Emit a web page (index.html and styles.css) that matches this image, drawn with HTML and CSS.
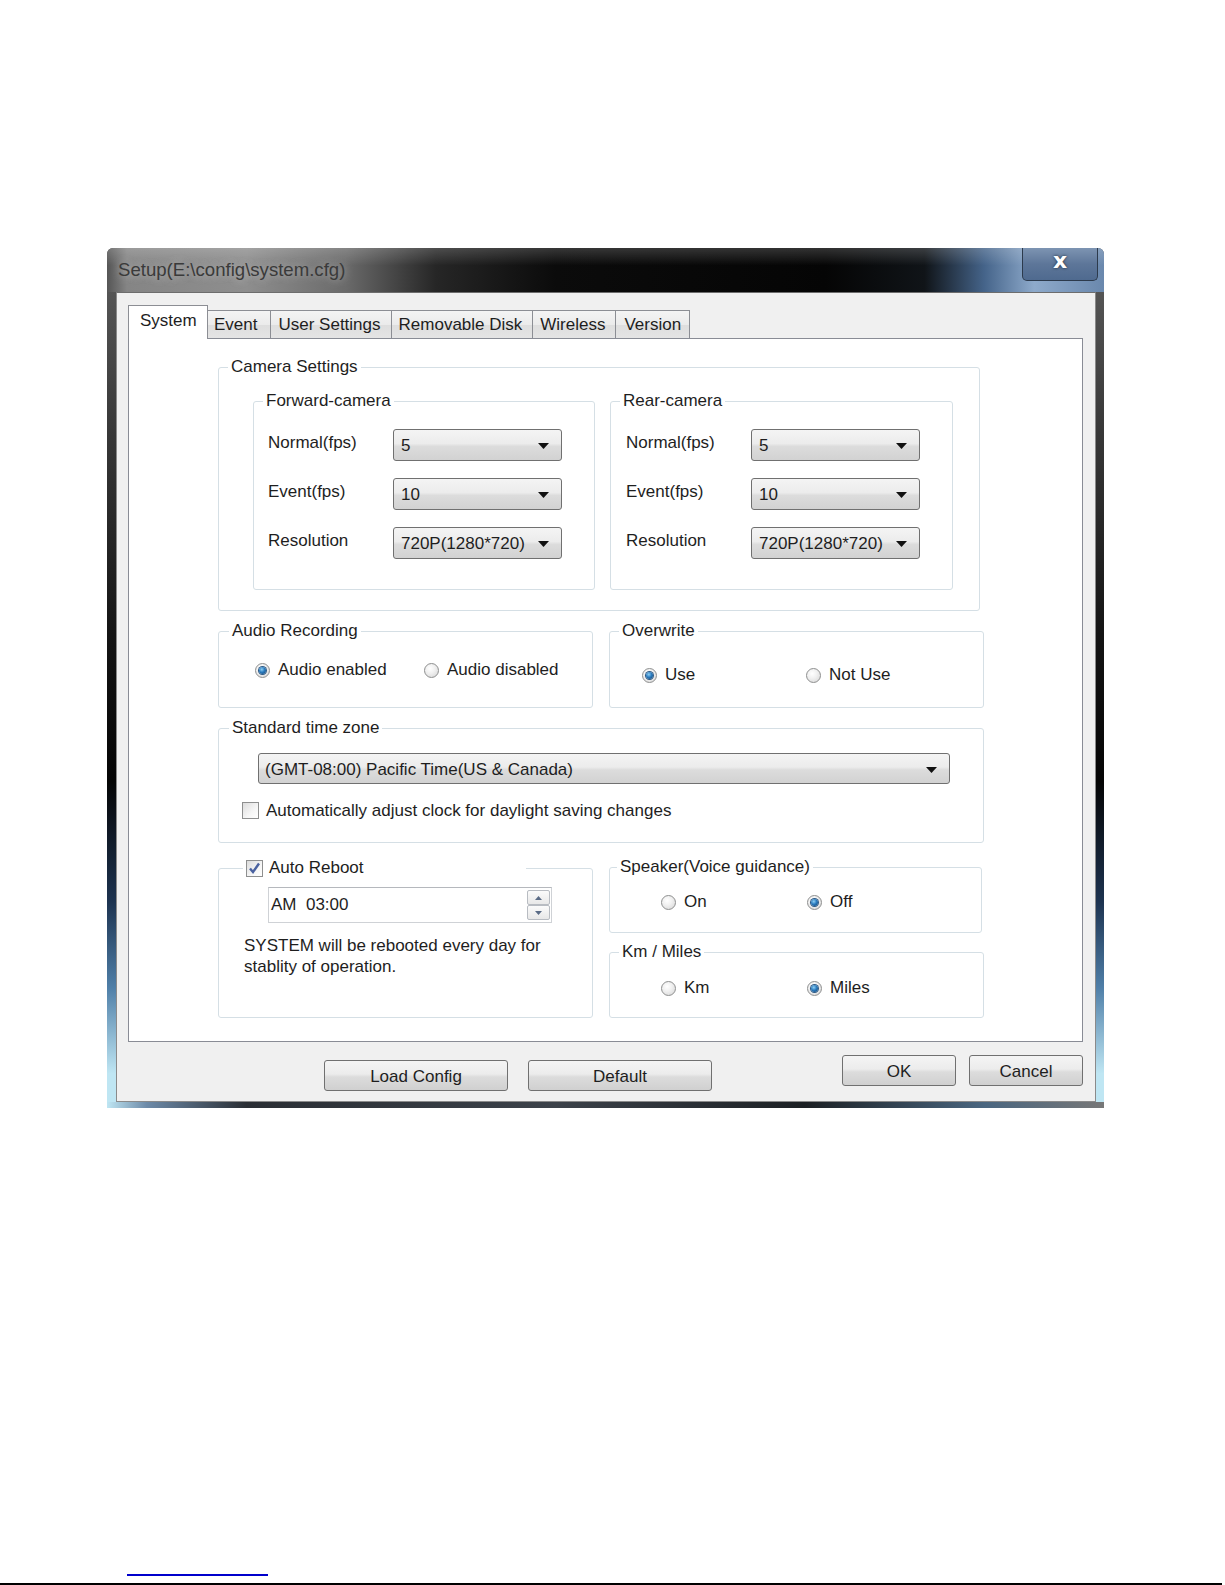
FILE: index.html
```html
<!DOCTYPE html>
<html lang="en">
<head>
    <meta charset="UTF-8">
    <title>Setup</title>
    <link rel="stylesheet" href="styles.css">
</head>
<body>
<div class="sheet">
    <div class="window">
        <div class="titlebar">
            <div class="title">Setup(E:\config\system.cfg)</div>
            <div class="close">x</div>
        </div>
        <div class="frame">
            <div class="client">
                <div class="tabs">
                    <div class="tab active">System</div>
                    <div class="tab">Event</div>
                    <div class="tab">User Settings</div>
                    <div class="tab">Removable Disk</div>
                    <div class="tab">Wireless</div>
                    <div class="tab">Version</div>
                </div>

                <div class="panel">
                    <!-- camera -->
                    <fieldset class="group camera">
                        <legend>Camera Settings</legend>
                        <div class="cams">
                            <fieldset class="group cam">
                                <legend>Forward-camera</legend>
                                <div class="rows">
                                    <div class="row"><span class="lbl">Normal(fps)</span><div class="combo">5<svg width="11" height="6"><path d="M0 0h11L5.5 6z"/></svg></div></div>
                                    <div class="row"><span class="lbl">Event(fps)</span><div class="combo">10<svg width="11" height="6"><path d="M0 0h11L5.5 6z"/></svg></div></div>
                                    <div class="row"><span class="lbl">Resolution</span><div class="combo">720P(1280*720)<svg width="11" height="6"><path d="M0 0h11L5.5 6z"/></svg></div></div>
                                </div>
                            </fieldset>
                            <fieldset class="group cam rear">
                                <legend>Rear-camera</legend>
                                <div class="rows">
                                    <div class="row"><span class="lbl">Normal(fps)</span><div class="combo">5<svg width="11" height="6"><path d="M0 0h11L5.5 6z"/></svg></div></div>
                                    <div class="row"><span class="lbl">Event(fps)</span><div class="combo">10<svg width="11" height="6"><path d="M0 0h11L5.5 6z"/></svg></div></div>
                                    <div class="row"><span class="lbl">Resolution</span><div class="combo">720P(1280*720)<svg width="11" height="6"><path d="M0 0h11L5.5 6z"/></svg></div></div>
                                </div>
                            </fieldset>
                        </div>
                    </fieldset>

                    <!-- audio / overwrite -->
                    <div class="pair">
                        <fieldset class="group audio">
                            <legend>Audio Recording</legend>
                            <div class="radios">
                                <label class="radio"><span class="dot on"></span>Audio enabled</label>
                                <label class="radio"><span class="dot"></span>Audio disabled</label>
                            </div>
                        </fieldset>
                        <fieldset class="group overwrite">
                            <legend>Overwrite</legend>
                            <div class="radios">
                                <label class="radio"><span class="dot on"></span>Use</label>
                                <label class="radio"><span class="dot"></span>Not Use</label>
                            </div>
                        </fieldset>
                    </div>

                    <!-- time zone -->
                    <fieldset class="group zone">
                        <legend>Standard time zone</legend>
                        <div class="combo wide">(GMT-08:00) Pacific Time(US &amp; Canada)<svg width="11" height="6"><path d="M0 0h11L5.5 6z"/></svg></div>
                        <label class="check"><span class="box"></span>Automatically adjust clock for daylight saving changes</label>
                    </fieldset>

                    <div class="pair last">
                        <fieldset class="group reboot">
                            <legend><label class="check"><span class="box checked"><svg width="13" height="12" viewBox="0 0 13 12"><path d="M2 6.5l3 3.5L11 1.5" fill="none" stroke="#4a62a0" stroke-width="2.4"/></svg></span>Auto Reboot</label></legend>
                            <div class="timebox">
                                <span>AM&nbsp; 03:00</span>
                                <div class="spin">
                                    <div class="spin-btn"><svg width="7" height="4"><path d="M0 4h7L3.5 0z"/></svg></div>
                                    <div class="spin-btn"><svg width="7" height="4"><path d="M0 0h7L3.5 4z"/></svg></div>
                                </div>
                            </div>
                            <p class="note">SYSTEM will be rebooted every day for<br>stablity of operation.</p>
                        </fieldset>
                        <div class="side">
                            <fieldset class="group speaker">
                                <legend>Speaker(Voice guidance)</legend>
                                <div class="radios">
                                    <label class="radio"><span class="dot"></span>On</label>
                                    <label class="radio"><span class="dot on"></span>Off</label>
                                </div>
                            </fieldset>
                            <fieldset class="group units">
                                <legend>Km / Miles</legend>
                                <div class="radios">
                                    <label class="radio"><span class="dot"></span>Km</label>
                                    <label class="radio"><span class="dot on"></span>Miles</label>
                                </div>
                            </fieldset>
                        </div>
                    </div>
                </div>

                <div class="buttons">
                    <div class="btn-group left">
                        <button class="btn big">Load Config</button>
                        <button class="btn big">Default</button>
                    </div>
                    <div class="btn-group right">
                        <button class="btn">OK</button>
                        <button class="btn">Cancel</button>
                    </div>
                </div>
            </div>
        </div>
    </div>

    <div class="footnote-rule"></div>
    <div class="page-edge"></div>
</div>
</body>
</html>
```

FILE: styles.css
```css
body {
    margin: 0;
    background: #fff;
    font-family: "Liberation Sans", Arial, sans-serif;
    font-size: 17px;
    color: #1e1e1e;
}
.sheet {
    width: 1225px;
    height: 1585px;
    padding-top: 248px;
    box-sizing: border-box;
    overflow: hidden;
}
.window {
    width: 997px;
    margin-left: 107px;
    border-radius: 6px 6px 0 0;
    overflow: hidden;
    background: linear-gradient(180deg, #5e5e5e 0, #3a3a3a 20%, #141414 45%, #050505 62%, #1d3350 76%, #4f7fa8 86%, #bfe6f3 96%);
}
.titlebar {
    height: 44px;
    display: flex;
    align-items: flex-start;
    background:
        linear-gradient(180deg, rgba(255,255,255,.18) 0, rgba(255,255,255,0) 40%),
        linear-gradient(90deg, #555 0, #858585 2%, #8e8e8e 14%, #6a6a6a 24%, #262626 33%, #0b0b0b 45%, #050505 72%, #101418 82%, #45648a 88%, #8eaacb 93%, #6a88ad 100%);
}
.title {
    flex: 1;
    padding-left: 11px;
    line-height: 44px;
    font-size: 18.6px;
    color: #3a3a3a;
    text-shadow: 0 0 8px rgba(220,220,220,.7);
}
.close {
    width: 74px;
    height: 32px;
    margin-right: 6px;
    border: 1px solid #2c3a4c;
    border-top: none;
    border-radius: 0 0 5px 5px;
    background: linear-gradient(180deg, #7d94b2 0, #5d7699 50%, #4f6a8f 100%);
    color: #fff;
    font: bold 22px "DejaVu Sans", sans-serif;
    text-align: center;
    line-height: 26px;
    text-shadow: 0 0 3px #1a2533;
}
.frame {
    padding: 0 8px 6px 9px;
    background: linear-gradient(90deg, #bfe6f3 0, #6d8aa8 4%, #2a2e34 14%, #3c424a 45%, #1c2024 70%, #4a6680 88%, #777 100%) bottom / 100% 6px no-repeat;
}
.client {
    height: 810px;
    box-sizing: border-box;
    background: #f0f0f0;
    padding: 13px 14px 0 11px;
    border: 1px solid #8a8a8a;
    border-top-color: #6d6d6d;
}

/* tabs */
.tabs {
    display: flex;
    align-items: flex-end;
    height: 33px;
    margin-bottom: -1px;
    position: relative;
    z-index: 1;
}
.tab {
    height: 27px;
    line-height: 27px;
    margin-bottom: 1px;
    margin-left: -1px;
    padding: 0 10px 0 7px;
    border: 1px solid #8c8e94;
    border-bottom: none;
    background: linear-gradient(180deg, #f4f4f4 0, #ebebeb 50%, #dedede 51%, #e4e4e4 100%);
    white-space: nowrap;
}
.tab.active {
    height: 33px;
    line-height: 30px;
    margin: 0;
    padding: 0 11px;
    background: #fff;
    width: 56px;
}
.tab:nth-child(2) { padding-left: 6px; padding-right: 13px; }
.tab:nth-child(6) { padding-left: 8px; padding-right: 8px; }
.panel {
    width: 955px;
    height: 704px;
    box-sizing: border-box;
    background: #fff;
    border: 1px solid #898c95;
    padding: 18px 0 0 89px;
}

/* group boxes */
.group {
    margin: 0;
    padding: 0;
    border: 1px solid #d5dfe5;
    border-radius: 3px;
    min-width: 0;
}
.group legend {
    margin-left: 9px;
    padding: 0 3px;
    line-height: 20px;
    height: 20px;
}
.camera {
    width: 762px;
    box-sizing: border-box;
    padding: 14px 0 20px;
}
.cams {
    display: flex;
    gap: 15px;
    margin-left: 34px;
}
.cam {
    width: 342px;
    box-sizing: border-box;
    padding: 18px 0 30px;
}
.cam.rear { width: 343px; }
.rows { margin-left: 14px; }
.rear .rows { margin-left: 15px; }
.row {
    display: flex;
    align-items: center;
    height: 32px;
    margin-bottom: 17px;
}
.row:last-child { margin-bottom: 0; }
.lbl {
    width: 125px;
    margin-top: -5px;
}
.combo {
    width: 169px;
    height: 32px;
    box-sizing: border-box;
    display: flex;
    align-items: center;
    justify-content: space-between;
    padding: 2px 12px 0 7px;
    border: 1px solid #707070;
    border-radius: 3px;
    background: linear-gradient(180deg, #f4f4f4 0, #ececec 45%, #dcdcdc 55%, #d2d2d2 100%);
}
.combo svg { fill: #111; }
.combo.wide {
    width: 692px;
    height: 31px;
    margin-left: 39px;
    padding-left: 6px;
}

.pair {
    display: flex;
    margin-top: 10px;
}
.audio, .overwrite {
    width: 375px;
    box-sizing: border-box;
}
.overwrite { margin-left: 16px; }
.audio { padding: 19px 0 27px; }
.overwrite { padding: 24px 0 22px; }
.audio legend { margin-left: 10px; }
.audio .radios { margin-left: 36px; }
.overwrite .radios { margin-left: 32px; }
.radios {
    display: flex;
    height: 20px;
}
.radio {
    display: flex;
    align-items: center;
    height: 20px;
}
.audio .radio:first-child { width: 169px; }
.overwrite .radio:first-child { width: 164px; }
.speaker .radio:first-child, .units .radio:first-child { width: 146px; }
.dot {
    width: 13px;
    height: 13px;
    border: 1px solid #8e8f8f;
    border-radius: 50%;
    margin-right: 8px;
    background: radial-gradient(circle at 40% 35%, #ffffff 0, #f1f1f1 40%, #d4d4d4 100%);
    display: flex;
    align-items: center;
    justify-content: center;
}
.dot.on::after {
    content: "";
    width: 7px;
    height: 7px;
    border-radius: 50%;
    background: radial-gradient(circle at 40% 35%, #8fd0f4 0, #2a7bbf 45%, #0d3e6e 100%);
    box-shadow: 0 0 0 1px #2d5a86;
}

.zone {
    width: 766px;
    box-sizing: border-box;
    margin-top: 10px;
    padding: 15px 0 23px;
}
.zone legend { margin-left: 10px; }
.check {
    display: flex;
    align-items: center;
    height: 17px;
    margin: 18px 0 0 23px;
}
.box {
    width: 15px;
    height: 15px;
    border: 1px solid #8e8f8f;
    margin-right: 7px;
    background: linear-gradient(135deg, #dcdcdc 0, #f6f6f6 60%, #ffffff 100%);
    display: flex;
    align-items: center;
    justify-content: center;
}

.pair.last {
    margin-top: 14px;
    align-items: flex-start;
}
.reboot {
    width: 375px;
    box-sizing: border-box;
    margin-top: 1px;
    padding: 9px 0 40px;
}
.reboot legend {
    margin-left: 24px;
    width: 277px;
}
.reboot legend .check {
    margin: 1px 0 0;
    height: 18px;
}
.reboot legend .box { margin-right: 6px; }
.timebox {
    width: 284px;
    height: 36px;
    margin-left: 49px;
    box-sizing: border-box;
    border: 1px solid #cfd2d6;
    border-top-color: #b5b8bd;
    background: #fff;
    display: flex;
    align-items: center;
    justify-content: space-between;
    padding: 0 1px 0 2px;
}
.spin {
    width: 23px;
    height: 30px;
    display: flex;
    flex-direction: column;
}
.spin-btn {
    flex: 1;
    border: 1px solid #b8bcc2;
    border-radius: 2px;
    background: linear-gradient(180deg, #fbfbfb 0, #e8e8e8 100%);
    display: flex;
    align-items: center;
    justify-content: center;
}
.spin-btn svg { fill: #5a6b86; }
.note {
    margin: 12px 0 0 25px;
    line-height: 21px;
}
.side {
    margin-left: 16px;
}
.speaker {
    width: 373px;
    box-sizing: border-box;
    padding: 15px 0 20px;
}
.units {
    width: 375px;
    box-sizing: border-box;
    margin-top: 9px;
    padding: 16px 0 19px;
}
.speaker legend { margin-left: 7px; }
.speaker .radios, .units .radios { margin-left: 51px; }

/* dialog buttons */
.buttons {
    display: flex;
    align-items: flex-start;
    margin-top: 13px;
    width: 955px;
}
.btn-group {
    display: flex;
}
.btn-group.left {
    margin-left: 196px;
    margin-top: 5px;
    gap: 20px;
}
.btn-group.right {
    margin-left: auto;
    gap: 13px;
}
.btn {
    width: 114px;
    height: 31px;
    padding: 2px 0 0;
    font: inherit;
    color: #1e1e1e;
    border: 1px solid #707070;
    border-radius: 3px;
    background: linear-gradient(180deg, #f4f4f4 0, #ececec 45%, #dcdcdc 55%, #d0d0d0 100%);
}
.btn.big { width: 184px; }

.footnote-rule {
    width: 141px;
    height: 2px;
    margin: 466px 0 0 127px;
    background: #0000cc;
}
.page-edge {
    height: 2px;
    width: 1222px;
    margin-top: 7px;
    background: #000;
}
```
